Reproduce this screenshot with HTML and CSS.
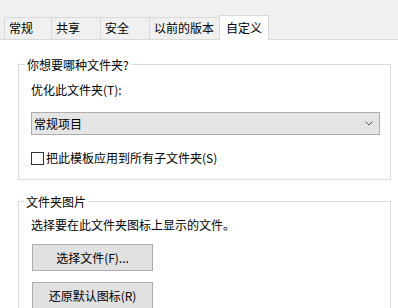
FILE: index.html
```html
<!DOCTYPE html>
<html lang="zh-CN">
<head>
<meta charset="utf-8">
<title>属性 - 自定义</title>
<link rel="stylesheet" href="styles.css">
</head>
<body>
<div class="dialog">
  <div class="tabs">
    <div class="tab">常规</div>
    <div class="tab">共享</div>
    <div class="tab">安全</div>
    <div class="tab">以前的版本</div>
    <div class="tab active">自定义</div>
  </div>
  <div class="panel">
    <fieldset class="group g1">
      <legend>你想要哪种文件夹?</legend>
      <div class="label">优化此文件夹(T):</div>
      <div class="select">
        <span>常规项目</span>
        <svg class="chev" width="8" height="5" viewBox="0 0 8 5"><polyline points="0.5,0.5 4,4 7.5,0.5" fill="none" stroke="#5a5a5a" stroke-width="1"/></svg>
      </div>
      <label class="check"><span class="box"></span><span>把此模板应用到所有子文件夹(S)</span></label>
    </fieldset>
    <fieldset class="group g2">
      <legend>文件夹图片</legend>
      <div class="desc">选择要在此文件夹图标上显示的文件。</div>
      <button class="btn">选择文件(F)...</button>
      <button class="btn">还原默认图标(R)</button>
    </fieldset>
  </div>
</div>
</body>
</html>
```

FILE: styles.css
```css
html, body {
  margin: 0;
  padding: 0;
}
body {
  width: 398px;
  height: 308px;
  overflow: hidden;
  background: #f0f0f0;
  font-family: "Noto Sans CJK SC", "Microsoft YaHei", sans-serif;
  font-size: 12px;
  color: #000;
}
.dialog {
  display: flex;
  flex-direction: column;
  height: 100%;
}
.tabs {
  display: flex;
  align-items: flex-end;
  padding: 15px 0 0 4px;
  height: 24px;
}
.tab {
  box-sizing: border-box;
  min-width: 49px;
  height: 22px;
  padding: 2px 5px 0 4px;
  line-height: 16px;
  border-top: 1px solid #d9d9d9;
  border-left: 1px solid #d9d9d9;
  background: #f0f0f0;
  white-space: nowrap;
}
.tab:first-child {
  min-width: 47px;
}
.tab.active {
  position: relative;
  z-index: 1;
  min-width: 50px;
  height: 25px;
  margin-bottom: -1px;
  padding: 4px 6px 0 6px;
  border-right: 1px solid #d9d9d9;
  background: #fff;
}
.panel {
  flex: 1;
  background: #fff;
  border-top: 1px solid #d9d9d9;
}
.group {
  margin: 0 7px 0 18px;
  border: 1px solid #dcdcdc;
  padding: 9px 10px 13px 12px;
  min-width: 0;
}
.group legend {
  padding: 0 2px;
  line-height: 17px;
  margin-left: -6px;
}
.g1 {
  margin-top: 16px;
}
.g2 {
  margin-top: 13px;
  padding-top: 7px;
}
.g2 legend {
  margin-left: -7px;
}
.label, .desc {
  line-height: 16px;
}
.select {
  box-sizing: border-box;
  height: 23px;
  margin-top: 14px;
  display: flex;
  align-items: center;
  justify-content: space-between;
  padding: 0 6px 0 2px;
  border: 1px solid #adadad;
  background: #e5e5e5;
  line-height: 16px;
}
.chev {
  display: block;
}
.check {
  display: flex;
  align-items: center;
  gap: 2px;
  height: 16px;
  margin-top: 15px;
  line-height: 16px;
}
.box {
  box-sizing: border-box;
  width: 13px;
  height: 13px;
  border: 1px solid #333;
  background: #fff;
}
.btn {
  display: block;
  box-sizing: border-box;
  width: 121px;
  height: 27px;
  margin: 11px 0 0 1px;
  padding: 0;
  border: 1px solid #adadad;
  background: #e1e1e1;
  font: inherit;
  color: #000;
  line-height: 16px;
}
```
